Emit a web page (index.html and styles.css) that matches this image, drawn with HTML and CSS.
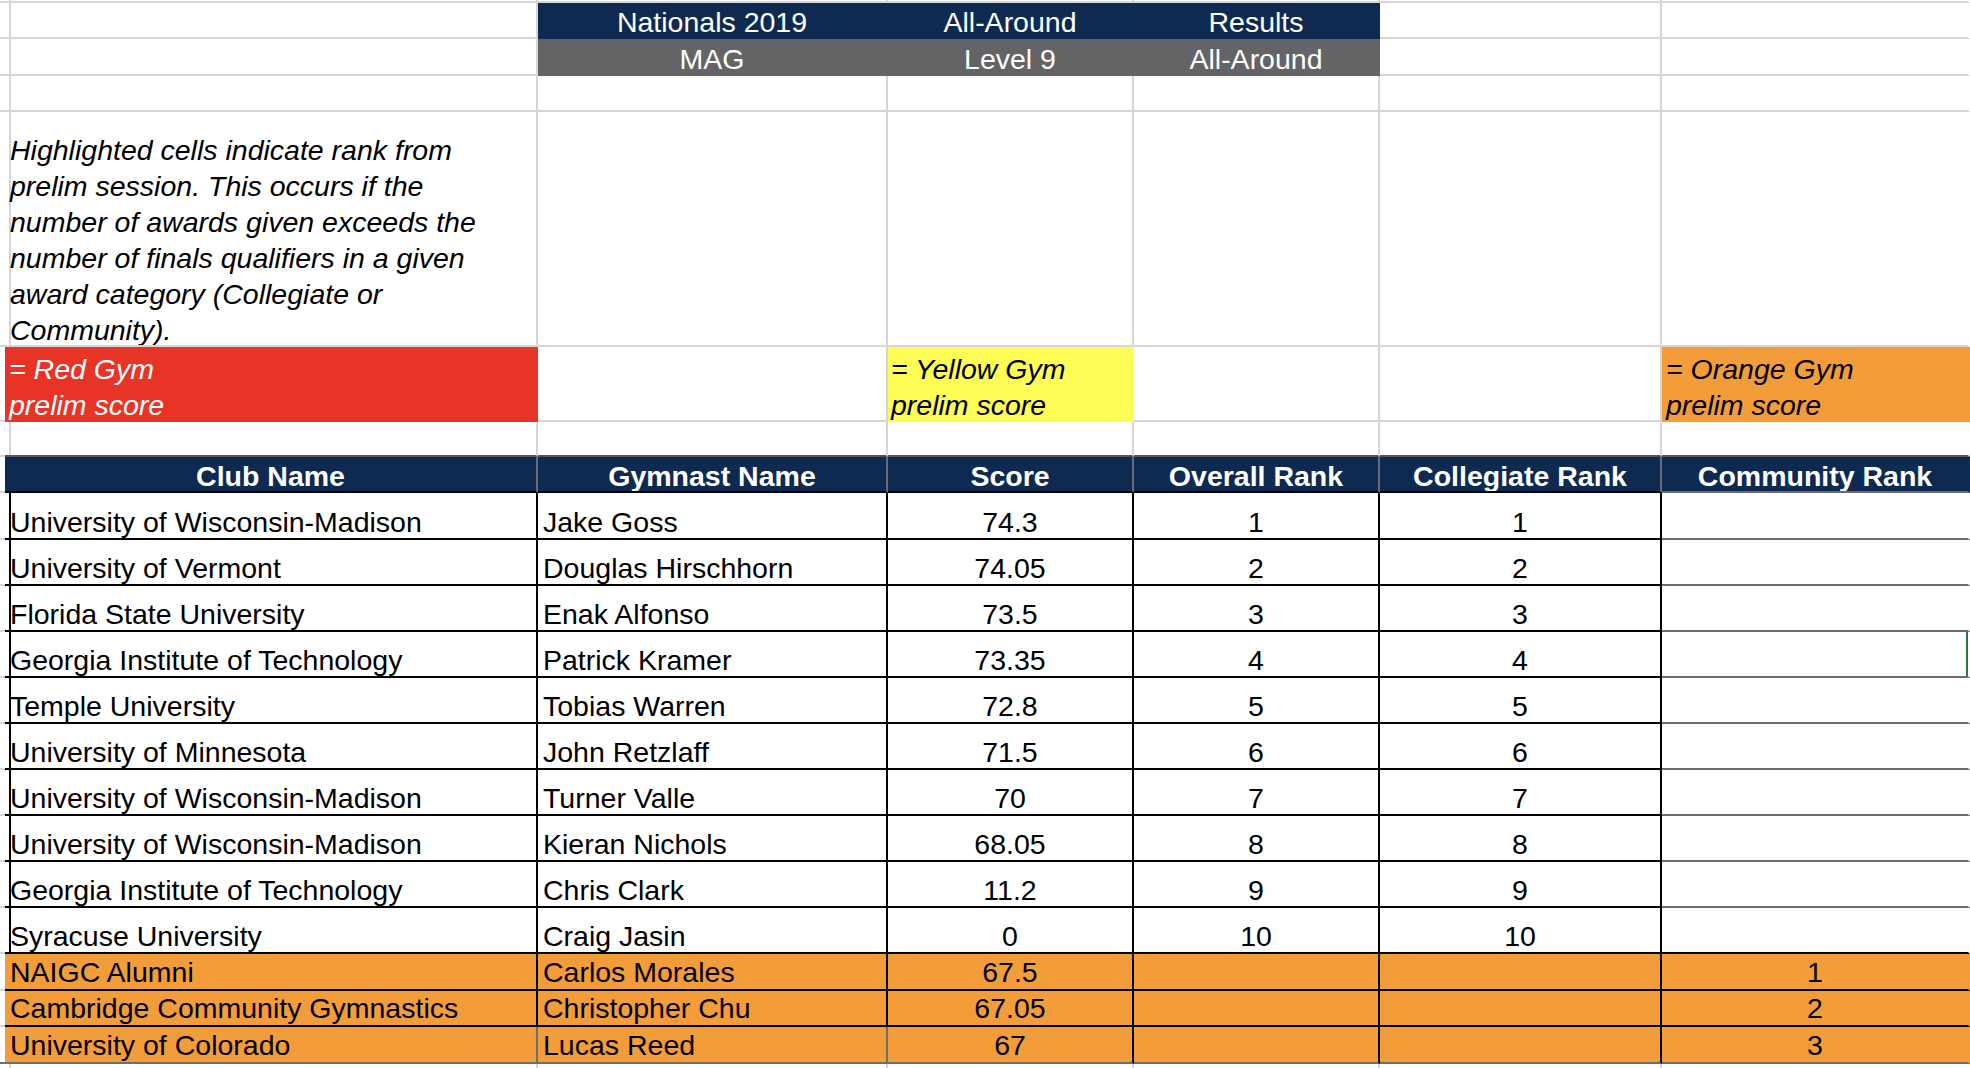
FILE: index.html
```html
<!DOCTYPE html>
<html lang="en">
<head>
<meta charset="utf-8">
<title>Nationals 2019 MAG Level 9 All-Around Results</title>
<link rel="stylesheet" href="styles.css">
</head>
<body>
<div class="sheet">
  <div class="row h-top">
    <div class="c"></div><div class="c"></div><div class="c"></div><div class="c"></div><div class="c"></div><div class="c"></div><div class="c f"></div>
  </div>
  <div class="row h36">
    <div class="c"></div><div class="c"></div>
    <div class="c ctr navy">Nationals 2019</div>
    <div class="c ctr navy">All-Around</div>
    <div class="c ctr navy">Results</div>
    <div class="c"></div><div class="c f"></div>
  </div>
  <div class="row h37">
    <div class="c"></div><div class="c"></div>
    <div class="c ctr grey">MAG</div>
    <div class="c ctr grey">Level 9</div>
    <div class="c ctr grey">All-Around</div>
    <div class="c"></div><div class="c f"></div>
  </div>
  <div class="row h36">
    <div class="c"></div><div class="c"></div><div class="c"></div><div class="c"></div><div class="c"></div><div class="c"></div><div class="c f"></div>
  </div>
  <div class="row h235">
    <div class="c"></div>
    <div class="c"><div class="note">Highlighted cells indicate rank from<br>prelim session. This occurs if the<br>number of awards given exceeds the<br>number of finals qualifiers in a given<br>award category (Collegiate or<br>Community).</div></div>
    <div class="c"></div><div class="c"></div><div class="c"></div><div class="c"></div><div class="c f"></div>
  </div>
  <div class="row h75">
    <div class="c"></div>
    <div class="c red"><div class="note">= Red Gym<br>prelim score</div></div>
    <div class="c"></div>
    <div class="c yellow"><div class="note">= Yellow Gym<br>prelim score</div></div>
    <div class="c"></div><div class="c"></div>
    <div class="c f orange-leg"><div class="note">= Orange Gym<br>prelim score</div></div>
  </div>
  <div class="row h35">
    <div class="c"></div><div class="c dk"></div><div class="c dk"></div><div class="c dk"></div><div class="c dk"></div><div class="c dk"></div><div class="c f dk"></div>
  </div>
  <div class="row h36">
    <div class="c sl-hd"></div>
    <div class="c ctr hd">Club Name</div>
    <div class="c ctr hd">Gymnast Name</div>
    <div class="c ctr hd">Score</div>
    <div class="c ctr hd">Overall Rank</div>
    <div class="c ctr hd">Collegiate Rank</div>
    <div class="c ctr hd hd-f">Community Rank</div>
  </div>

  <div class="row h47 data">
    <div class="c sl"></div><div class="c bk">University of Wisconsin-Madison</div><div class="c bk">Jake Goss</div><div class="c bk ctr">74.3</div><div class="c bk ctr">1</div><div class="c bk ctr">1</div><div class="c fx"></div>
  </div>
  <div class="row h46 data">
    <div class="c sl"></div><div class="c bk">University of Vermont</div><div class="c bk">Douglas Hirschhorn</div><div class="c bk ctr">74.05</div><div class="c bk ctr">2</div><div class="c bk ctr">2</div><div class="c fx"></div>
  </div>
  <div class="row h46 data">
    <div class="c sl"></div><div class="c bk">Florida State University</div><div class="c bk">Enak Alfonso</div><div class="c bk ctr">73.5</div><div class="c bk ctr">3</div><div class="c bk ctr">3</div><div class="c fx"></div>
  </div>
  <div class="row h46 data">
    <div class="c sl"></div><div class="c bk">Georgia Institute of Technology</div><div class="c bk">Patrick Kramer</div><div class="c bk ctr">73.35</div><div class="c bk ctr">4</div><div class="c bk ctr">4</div><div class="c fx sel"></div>
  </div>
  <div class="row h46 data">
    <div class="c sl"></div><div class="c bk">Temple University</div><div class="c bk">Tobias Warren</div><div class="c bk ctr">72.8</div><div class="c bk ctr">5</div><div class="c bk ctr">5</div><div class="c fx"></div>
  </div>
  <div class="row h46 data">
    <div class="c sl"></div><div class="c bk">University of Minnesota</div><div class="c bk">John Retzlaff</div><div class="c bk ctr">71.5</div><div class="c bk ctr">6</div><div class="c bk ctr">6</div><div class="c fx"></div>
  </div>
  <div class="row h46 data">
    <div class="c sl"></div><div class="c bk">University of Wisconsin-Madison</div><div class="c bk">Turner Valle</div><div class="c bk ctr">70</div><div class="c bk ctr">7</div><div class="c bk ctr">7</div><div class="c fx"></div>
  </div>
  <div class="row h46 data">
    <div class="c sl"></div><div class="c bk">University of Wisconsin-Madison</div><div class="c bk">Kieran Nichols</div><div class="c bk ctr">68.05</div><div class="c bk ctr">8</div><div class="c bk ctr">8</div><div class="c fx"></div>
  </div>
  <div class="row h46 data">
    <div class="c sl"></div><div class="c bk">Georgia Institute of Technology</div><div class="c bk">Chris Clark</div><div class="c bk ctr">11.2</div><div class="c bk ctr">9</div><div class="c bk ctr">9</div><div class="c fx"></div>
  </div>
  <div class="row h46 data">
    <div class="c sl"></div><div class="c bk">Syracuse University</div><div class="c bk">Craig Jasin</div><div class="c bk ctr">0</div><div class="c bk ctr">10</div><div class="c bk ctr">10</div><div class="c fx fx-bk"></div>
  </div>

  <div class="row h37 orow">
    <div class="c sl"></div><div class="c bk or">NAIGC Alumni</div><div class="c bk or">Carlos Morales</div><div class="c bk or ctr">67.5</div><div class="c bk or"></div><div class="c bk or"></div><div class="c or fo ctr">1</div>
  </div>
  <div class="row h36 orow">
    <div class="c sl"></div><div class="c bk or">Cambridge Community Gymnastics</div><div class="c bk or">Christopher Chu</div><div class="c bk or ctr">67.05</div><div class="c bk or"></div><div class="c bk or"></div><div class="c or fo ctr">2</div>
  </div>
  <div class="row h37 orow">
    <div class="c sl gl"></div><div class="c bk or gl">University of Colorado</div><div class="c bk or gl">Lucas Reed</div><div class="c bk or gb ctr">67</div><div class="c bk or gb"></div><div class="c bk or gb"></div><div class="c or fo gb ctr">3</div>
  </div>
  <div class="row h-end">
    <div class="c"></div><div class="c"></div><div class="c"></div><div class="c"></div><div class="c"></div><div class="c"></div><div class="c f"></div>
  </div>
</div>
</body>
</html>
```

FILE: styles.css
```css
html, body {
  margin: 0;
  padding: 0;
  background: #ffffff;
}

body {
  width: 1970px;
  height: 1068px;
  overflow: hidden;
  font-family: "Liberation Sans", Arial, Helvetica, sans-serif;
}

.sheet {
  --cols: 5px 533px 350px 246px 246px 282px 308px;
  width: 1970px;
}

.row {
  display: grid;
  grid-template-columns: var(--cols);
}

.h-top { height: 3px; }
.h35 { height: 35px; }
.h36 { height: 36px; }
.h37 { height: 37px; }
.h46 { height: 46px; }
.h47 { height: 47px; }
.h75 { height: 75px; }
.h235 { height: 235px; }
.h-end { height: 20px; }

.c {
  box-sizing: border-box;
  min-width: 0;
  overflow: hidden;
  display: flex;
  align-items: flex-end;
  padding: 0 4px 0 5px;
  border-right: 2px solid #d6d6d6;
  border-bottom: 2px solid #d6d6d6;
  font-size: 28.5px;
  line-height: 30px;
  color: #000000;
  white-space: nowrap;
}

.data .c { line-height: 32px; }
.orow .c { line-height: 34px; }

.c.f { border-right-color: transparent; }

.ctr {
  justify-content: center;
  padding: 0;
}

.note {
  font-style: italic;
  line-height: 36px;
  margin-bottom: -3px;
}

/* top title bands */
.navy {
  background: #0e2a51;
  color: #ffffff;
  border-color: transparent;
}

.grey {
  background: #646466;
  color: #ffffff;
  border-color: transparent;
}

/* legend */
.red {
  background: #e73427;
  color: #ffffff;
  border-color: transparent;
  padding-left: 4px;
}

.yellow {
  background: #fdfd55;
  border-color: transparent;
  padding-left: 3px;
}

.orange-leg {
  background: #f29d3a;
  border-color: transparent;
  padding-left: 4px;
}

/* line above the results header */
.dk { border-bottom-color: #55565a; }

/* results header */
.hd {
  background: #0e2a51;
  color: #ffffff;
  font-weight: bold;
  border-right-color: #676b73;
  border-bottom-color: #000000;
}

.hd-f {
  border-right-color: transparent;
  border-bottom-color: #6b6b6b;
}

.sl-hd { border-right-color: #3a3a3a; }

/* data rows */
.sl { border-right-color: #000000; }

.bk {
  border-right-color: #000000;
  border-bottom-color: #000000;
}

.fx {
  border-right-color: transparent;
  border-bottom-color: #6b6b6b;
}

.fx-bk { border-bottom-color: #000000; }

.sel { box-shadow: inset -2px 0 0 #2f7448; }

/* orange rows */
.or { background: #f29d3a; }

.fo {
  border-right-color: transparent;
  border-bottom-color: #000000;
}

.gl {
  border-right-color: #6e6e6e;
  border-bottom-color: #6e6e6e;
}

.gb { border-bottom-color: #6e6e6e; }
```
